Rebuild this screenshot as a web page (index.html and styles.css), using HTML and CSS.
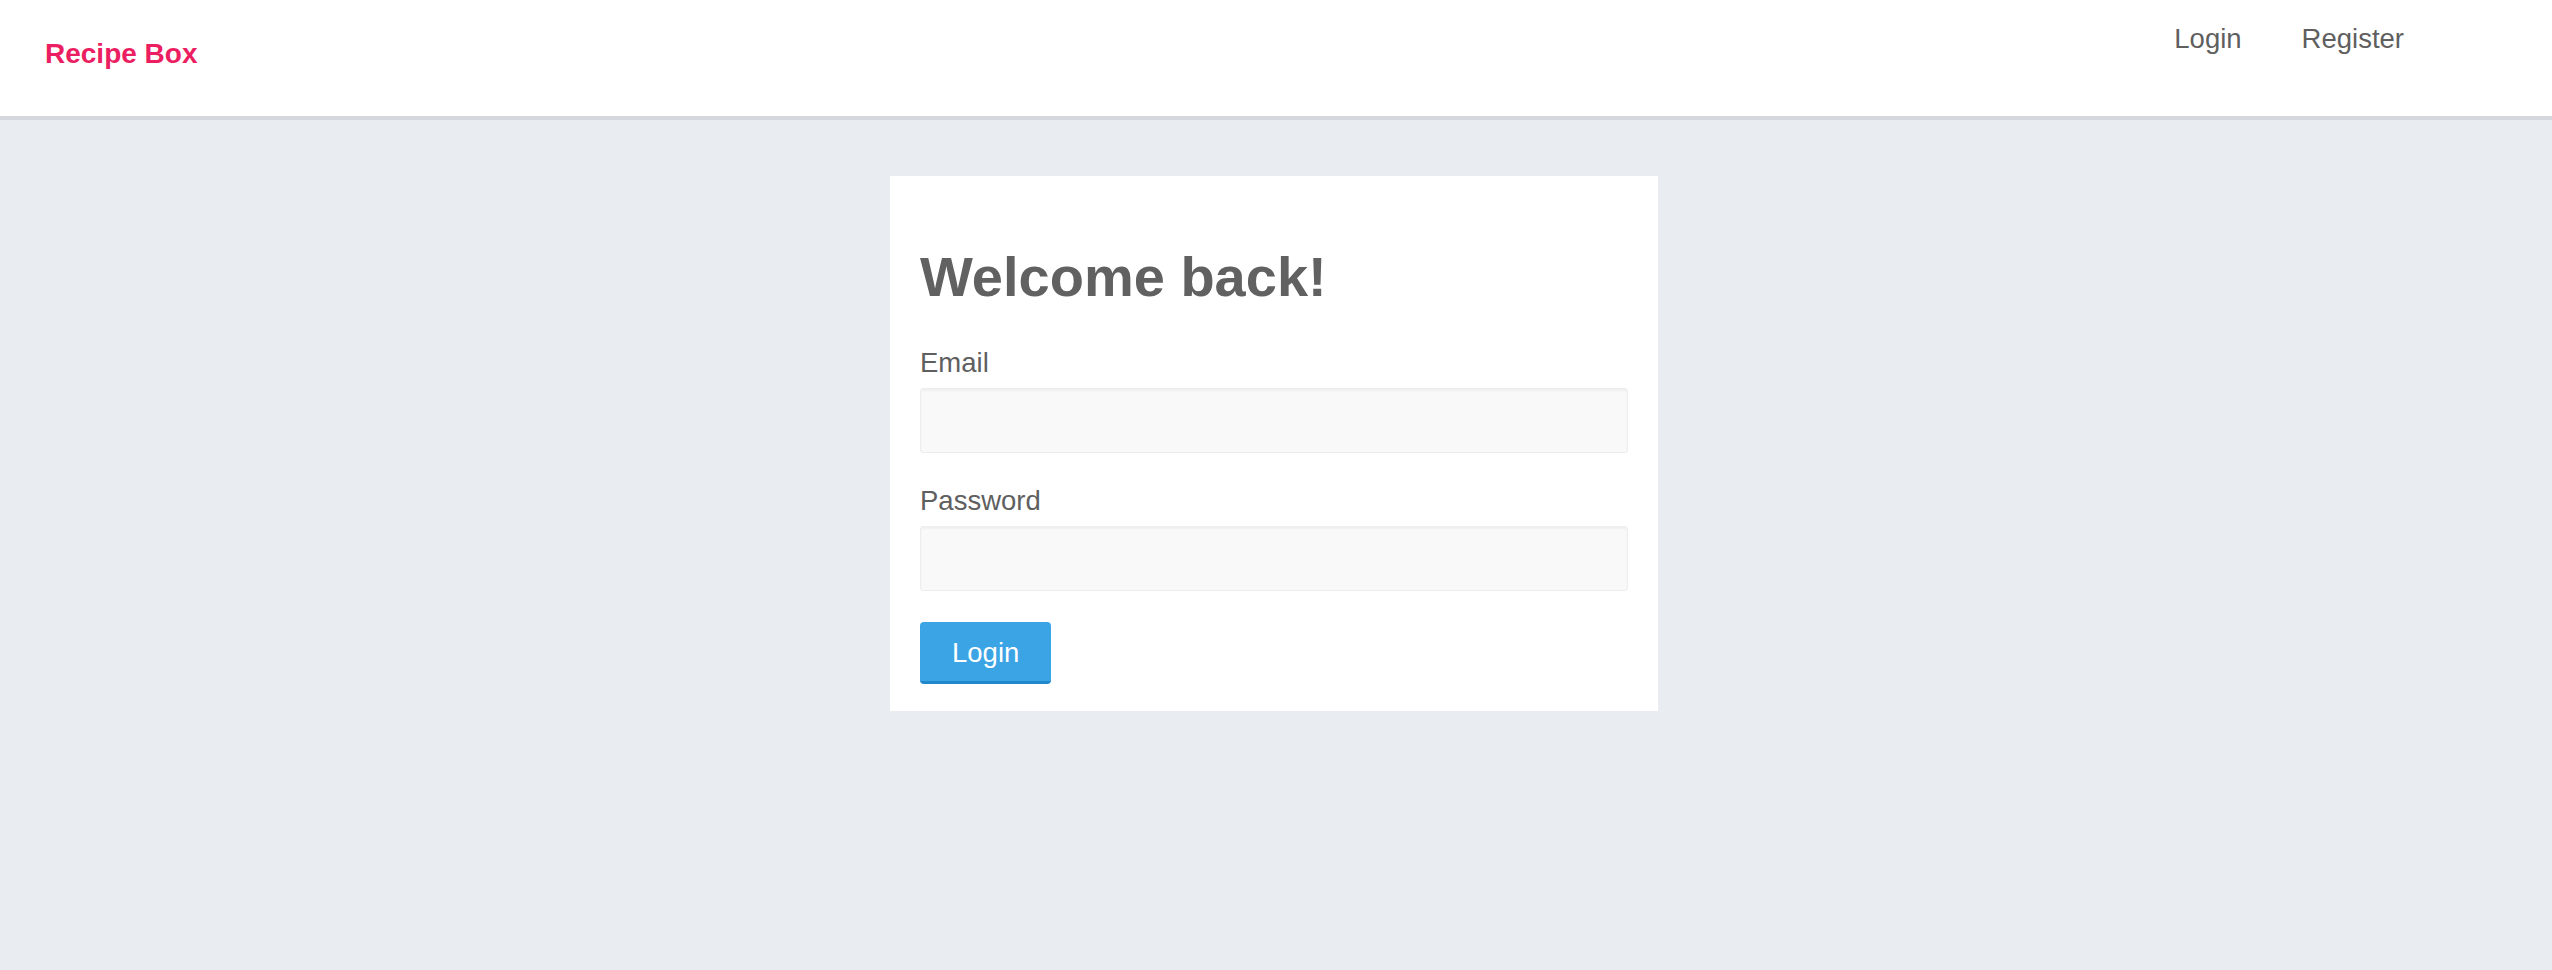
FILE: index.html
```html
<!DOCTYPE html>
<html lang="en">
<head>
  <meta charset="UTF-8" />
  <meta name="viewport" content="width=device-width, initial-scale=1.0"/>
  <title>Recipe Box</title>
  <link rel="stylesheet" href="styles.css">
</head>
<body>

<!-- Navbar -->
<header class="navbar">
  <a class="brand" href="#">Recipe Box</a>
  <nav class="nav-links">
    <a href="#">Login</a>
    <a href="#">Register</a>
  </nav>
</header>

<!-- Login form -->
<main class="page">
  <div class="card">
    <h1 class="card-title">Welcome back!</h1>
    <form>
      <div class="field">
        <label for="email">Email</label>
        <input type="email" id="email">
      </div>
      <div class="field">
        <label for="password">Password</label>
        <input type="password" id="password">
      </div>
      <button type="submit" class="btn">Login</button>
    </form>
  </div>
</main>

</body>
</html>
```

FILE: styles.css
```css
body {
  font-family: "Liberation Sans", Arial, sans-serif;
  margin: 0;
  padding: 0;
  background: #e9edf2;
  color: #5f5f5f;
}

a {
  text-decoration: none;
}

.navbar {
  display: flex;
  justify-content: space-between;
  align-items: flex-start;
  height: 116px;
  padding: 0 148px 0 45px;
  background: #fff;
  border-bottom: 4px solid #d4d8dd;
}

.brand {
  margin-top: 40px;
  font-size: 28px;
  line-height: 1;
  font-weight: bold;
  color: #ec1e62;
}

.nav-links {
  display: flex;
  gap: 60px;
  margin-top: 25px;
}

.nav-links a {
  font-size: 27.5px;
  line-height: 1;
  color: #5f5f5f;
}

.page {
  padding: 56px 4px 0 0;
}

.card {
  width: 768px;
  margin: 0 auto;
  padding: 73px 30px 27px;
  box-sizing: border-box;
  background: #fff;
  box-shadow: 0 2px 0 #d4d8dd;
}

.card-title {
  margin: 0 0 41px;
  font-size: 56px;
  line-height: 1;
  font-weight: bold;
  color: #616161;
}

.field {
  margin-bottom: 31px;
}

.field label {
  display: block;
  margin-bottom: 9px;
  font-size: 27.5px;
  line-height: 33px;
}

.field input {
  display: block;
  width: 100%;
  height: 65px;
  box-sizing: border-box;
  background: #f9f9f9;
  border: 1px solid #ededed;
  border-radius: 3px;
  box-shadow: inset 0 2px 2px rgba(0, 0, 0, 0.04);
  outline: none;
}

.btn {
  padding: 14px 32px 12px;
  font-family: inherit;
  font-size: 27.5px;
  line-height: 33px;
  color: #fff;
  background: #3ba4e4;
  border: none;
  border-bottom: 3px solid #2288cc;
  border-radius: 4px;
  cursor: pointer;
}
```
